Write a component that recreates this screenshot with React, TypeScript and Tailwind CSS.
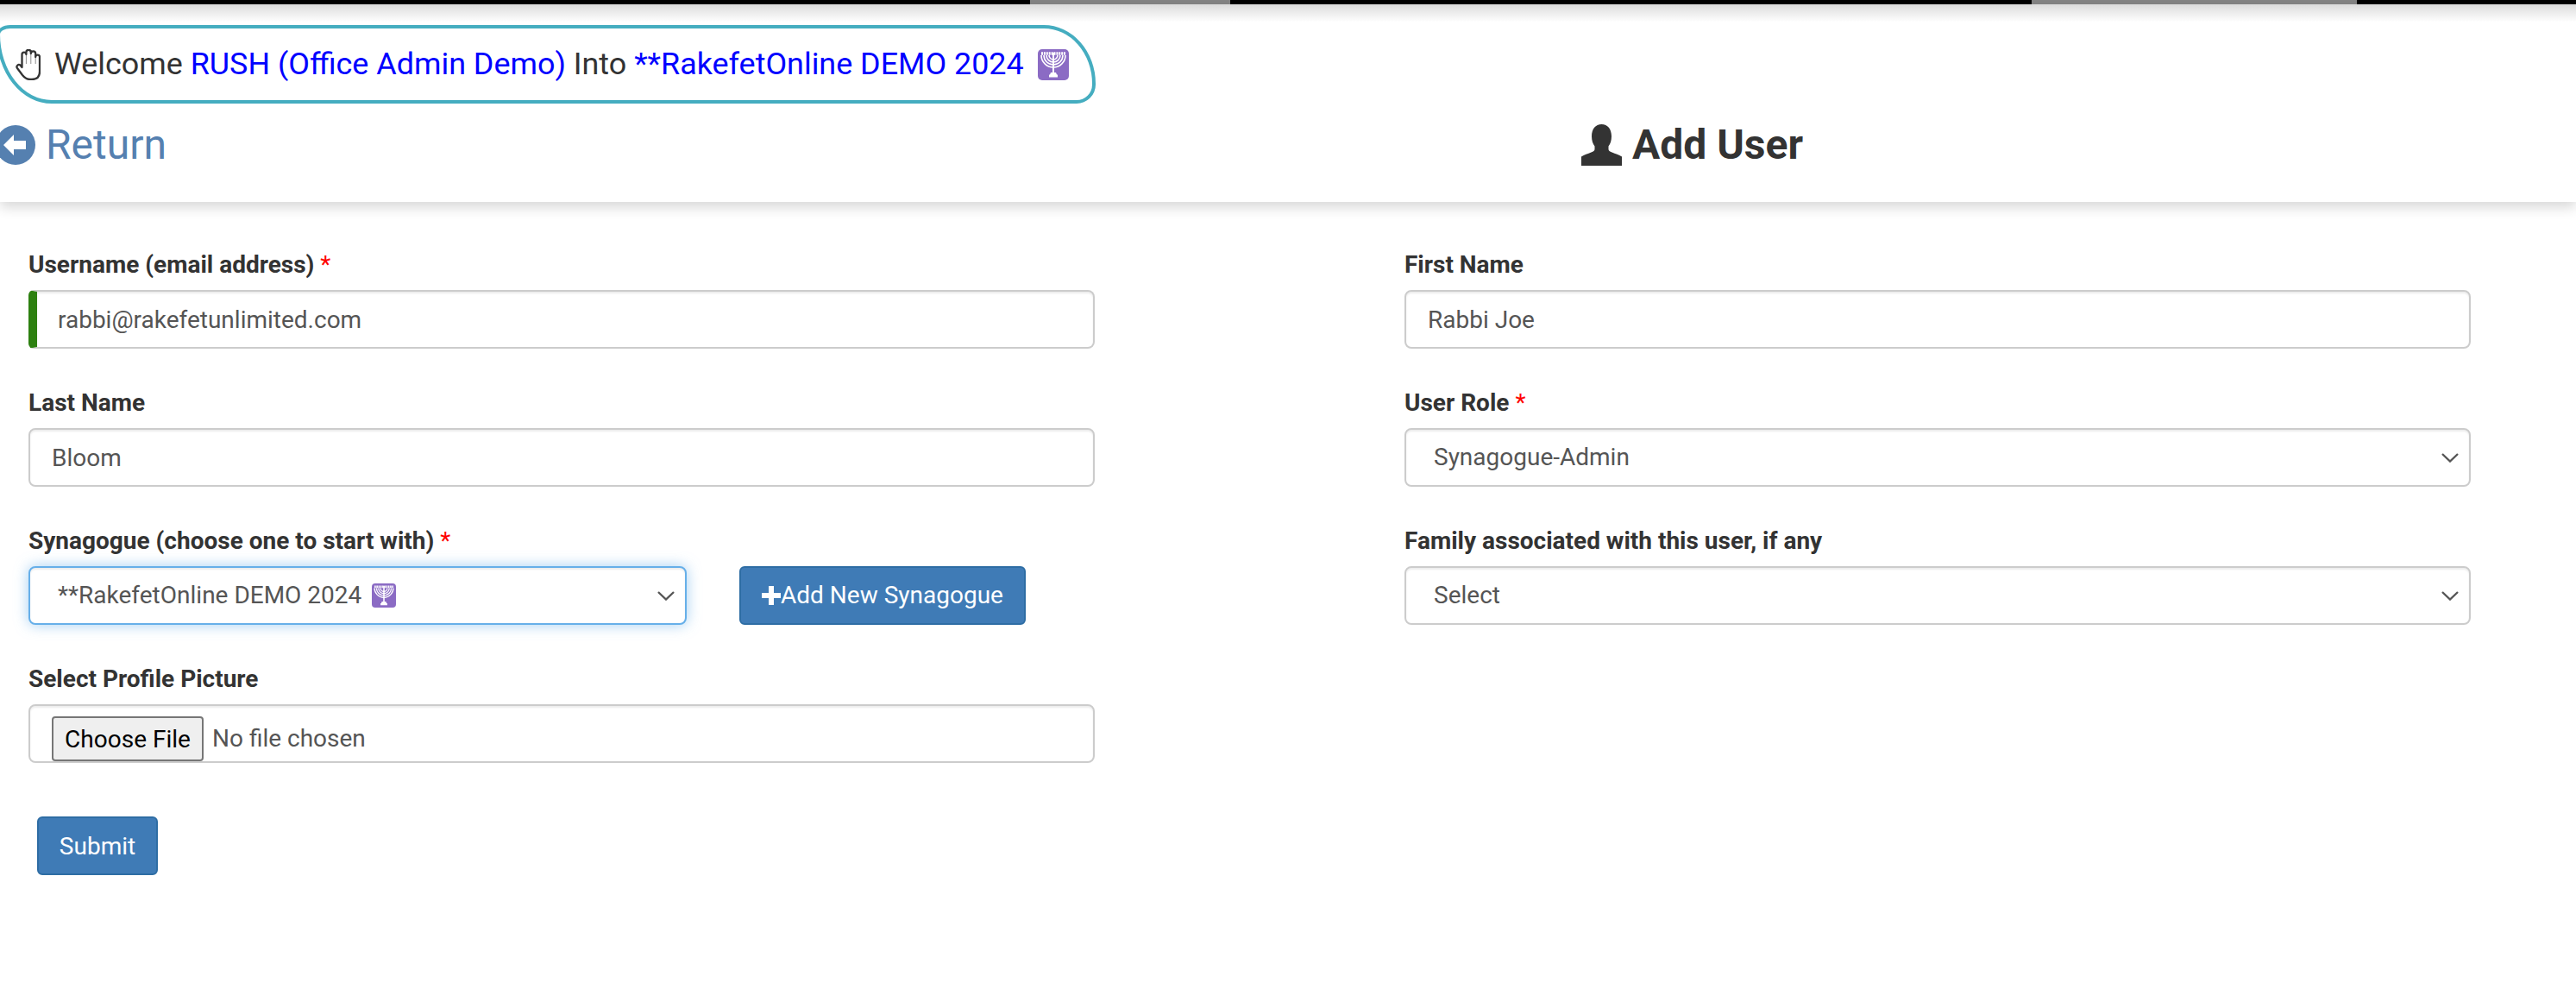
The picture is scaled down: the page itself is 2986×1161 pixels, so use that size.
function Menorah({ className }: { className: string }) {
  const arcs = [5, 8, 11, 14];
  return (
    <svg viewBox="0 0 36 36" className={className}>
      <rect width="36" height="36" rx="5" fill="#8b6bc4" />
      <path d="M4 5h28" stroke="#fff" strokeWidth="3.6" strokeDasharray="2 0.9" fill="none" />
      {arcs.map((r) => (
        <path key={r} d={`M${18 - r} 7a${r} ${r} 0 0 0 ${r * 2} 0`} fill="none" stroke="#fff" strokeWidth="1.6" />
      ))}
      <path d="M17 4h2v25h-2zM15 27h6l1 2.500h1v3H13v-3h1z" fill="#fff" />
    </svg>
  );
}

function HandIcon() {
  return (
    <svg viewBox="0 0 29 36" className="w-[29px] h-[36px] mr-[16px] shrink-0" fill="none" stroke="#333" strokeLinejoin="round">
      <path
        strokeWidth="2.3"
        d="M7.500 21L5.500 18.500A2.500 2.500 0 0 0 2 22L8 30Q12 35 17 35H19Q28 35 28 26V9A2.400 2.400 0 0 0 23.200 9V5A2.700 2.700 0 0 0 17.800 5V3.500A2.700 2.700 0 0 0 12.400 3.500V6A2.450 2.450 0 0 0 7.500 6Z"
      />
      <path strokeWidth="1" strokeOpacity="0.55" d="M12.400 6V17M17.800 5V17M23.200 9V17" />
    </svg>
  );
}

function Chevron() {
  return (
    <svg viewBox="0 0 20 11" className="w-[20px] h-[11px]" fill="none" stroke="#555" strokeWidth="2.4">
      <path d="M1 1l9 8.500L19 1" />
    </svg>
  );
}

function Required() {
  return <span className="text-[#ff0000] font-normal"> *</span>;
}

function Field({ label, required, children }: { label: string; required?: boolean; children: React.ReactNode }) {
  return (
    <div className="h-[160px]">
      <label className="block text-[28px] leading-[42px] font-bold text-[#333] mb-[8px]">
        {label}
        {required && <Required />}
      </label>
      {children}
    </div>
  );
}

const inputCls =
  'block w-full h-[68px] rounded-[8px] border-2 border-[#ccc] bg-white px-[25px] text-[28px] text-[#555] shadow-[inset_0_2px_2px_rgba(0,0,0,0.075)] outline-none';

function SelectBox({ value, focused, icon, wide = true }: { value: string; focused?: boolean; icon?: boolean; wide?: boolean }) {
  return (
    <div
      className={`flex items-center justify-between h-[68px] rounded-[8px] border-2 bg-white pl-[32px] pr-[12px] text-[28px] text-[#555] ${
        wide ? 'w-full' : 'w-[763px]'
      } ${
        focused
          ? 'border-[#66afe9] shadow-[inset_0_2px_2px_rgba(0,0,0,0.075),0_0_16px_rgba(102,175,233,0.6)]'
          : 'border-[#ccc] shadow-[inset_0_2px_2px_rgba(0,0,0,0.075)]'
      }`}
    >
      <span className="flex items-center gap-[12px]">
        {value}
        {icon && <Menorah className="w-[28px] h-[28px]" />}
      </span>
      <Chevron />
    </div>
  );
}

export default function App() {
  return (
    <div className="min-h-screen bg-white overflow-hidden font-['Roboto',sans-serif] text-[#333]">
      {/* top strip */}
      <div className="flex h-[5px] bg-black">
        <div className="w-[1194px]" />
        <div className="w-[232px] bg-[#858585]" />
        <div className="w-[929px]" />
        <div className="w-[377px] bg-[#858585]" />
      </div>

      <header className="h-[229px] bg-white bg-gradient-to-b from-[#dcdcdc] to-white to-[9%] shadow-[0_6px_14px_rgba(0,0,0,0.16)] relative">
        <div className="pt-[24px]">
          <div className="flex items-center ml-[-4px] w-[1274px] h-[91px] border-[4px] border-[#45adc0] rounded-[16px_60px_22px_64px/11px_68px_22px_80px] bg-white pl-[18px] text-[35.9px] leading-none whitespace-nowrap">
            <HandIcon />
            <span>Welcome&nbsp;</span>
            <span className="text-[#0000ff]">RUSH (Office Admin Demo)&nbsp;</span>
            <span>Into&nbsp;</span>
            <span className="text-[#0000ff]">**RakefetOnline DEMO 2024</span>
            <Menorah className="w-[36px] h-[36px] ml-[16px]" />
          </div>
        </div>

        <div className="flex items-center h-[66px] mt-[15px]">
          <div className="flex items-center w-[1833px] ml-[-5px] text-[48px] text-[#5580b0]">
            <svg viewBox="0 0 46 46" className="w-[46px] h-[46px]">
              <circle cx="23" cy="23" r="23" fill="#5580b0" />
              <path d="M9 23l12-12v7h14v10H21v7z" fill="#fff" />
            </svg>
            <span className="ml-[12px]">Return</span>
          </div>
          <svg viewBox="0 0 47 48" className="w-[47px] h-[48px] ml-[5px]">
            <path
              fill="#333"
              d="M23.500 0c7 0 11.500 5.500 11.500 14 0 5-1.500 9-3.500 11.500v3.500c0 1.500 1.500 2.500 4 3.500 4 1.500 8 3 11.500 5v10.500H0V37.500c3.500-2 7.500-3.500 11.500-5 2.500-1 4-2 4-3.500v-3.500C13.500 23 12 19 12 14 12 5.500 16.500 0 23.500 0z"
            />
          </svg>
          <h1 className="ml-[12px] text-[48px] font-bold text-[#333]">Add User</h1>
        </div>
      </header>

      <main className="ml-[33px] mt-[52px] grid grid-cols-[1236px_1236px] gap-x-[359px]">
        <div>
          <Field label="Username (email address)" required>
            <input readOnly value="rabbi@rakefetunlimited.com" className={`${inputCls} border-l-[10px] border-l-[#2d8010] rounded-l-[6px] pl-[24px]`} />
          </Field>
          <Field label="Last Name">
            <input readOnly value="Bloom" className={inputCls} />
          </Field>
          <Field label="Synagogue (choose one to start with)" required>
            <div className="flex gap-[61px]">
              <SelectBox value="**RakefetOnline DEMO 2024" focused icon wide={false} />
              <button className="flex items-center justify-center h-[68px] w-[332px] rounded-[6px] border-2 border-[#2e6da4] bg-[#3f7bb6] text-[28px] text-white whitespace-nowrap">
                <svg viewBox="0 0 22 22" className="w-[22px] h-[22px]">
                  <path d="M8 0h6v8h8v6h-8v8H8v-8H0V8h8z" fill="#fff" />
                </svg>
                Add New Synagogue
              </button>
            </div>
          </Field>
          <Field label="Select Profile Picture">
            <div className="flex items-end h-[68px] rounded-[8px] border-2 border-[#ccc] pl-[25px] text-[28px] text-[#555] shadow-[inset_0_2px_2px_rgba(0,0,0,0.075)]">
              <span className="flex items-center justify-center h-[52px] w-[176px] rounded-[4px] border-2 border-[#767676] bg-[#efefef] pt-[2px] text-black">
                Choose File
              </span>
              <span className="ml-[10px] pt-[2px] leading-[52px]">No file chosen</span>
            </div>
          </Field>
        </div>
        <div>
          <Field label="First Name">
            <input readOnly value="Rabbi Joe" className={inputCls} />
          </Field>
          <Field label="User Role" required>
            <SelectBox value="Synagogue-Admin" />
          </Field>
          <Field label="Family associated with this user, if any">
            <SelectBox value="Select" />
          </Field>
        </div>
      </main>

      <button className="block ml-[43px] mt-[20px] h-[68px] w-[140px] rounded-[6px] border-2 border-[#2e6da4] bg-[#3f7bb6] pt-[2px] text-[28px] text-white">
        Submit
      </button>
    </div>
  );
}
